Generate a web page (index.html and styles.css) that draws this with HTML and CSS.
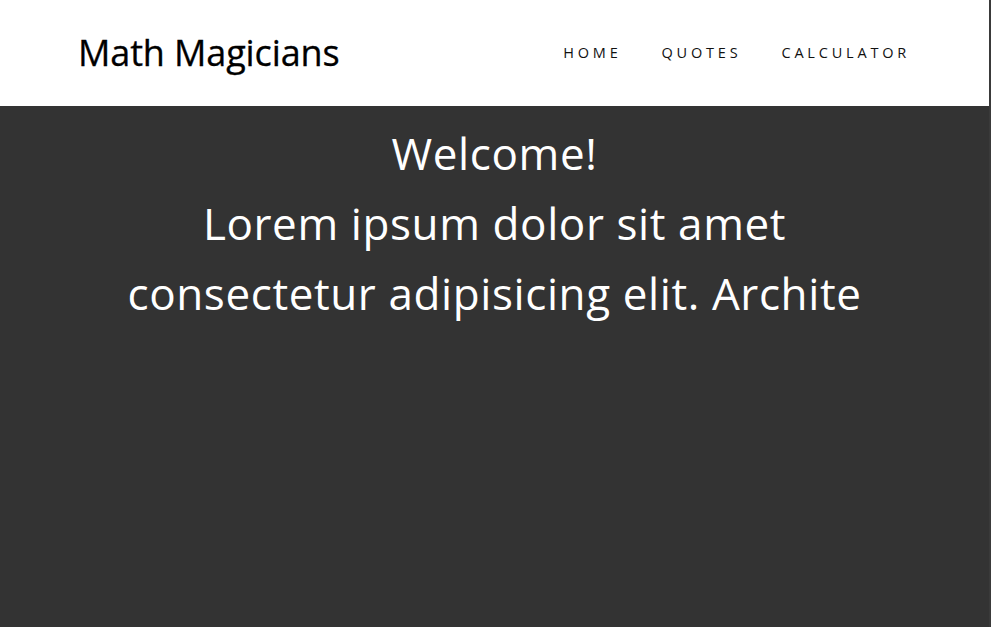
FILE: index.html
```html
<!DOCTYPE html>
<html lang="en">
<head>
<meta charset="utf-8">
<title>Math Magicians</title>
<link rel="stylesheet" href="styles.css">
</head>
<body>
<div class="page">
  <header class="header">
    <h1 class="logo">Math Magicians</h1>
    <nav class="nav">
      <a class="nav-link" href="#">Home</a>
      <a class="nav-link" href="#">Quotes</a>
      <a class="nav-link" href="#">Calculator</a>
    </nav>
  </header>
  <main class="hero">
    <h2 class="hero-title">Welcome!</h2>
    <p class="hero-text">Lorem ipsum dolor sit amet consectetur adipisicing elit. Archite</p>
  </main>
</div>
</body>
</html>
```
FILE: styles.css
```css
html, body {
  margin: 0;
  padding: 0;
  height: 100%;
}
body {
  font-family: "Open Sans", "Noto Sans", sans-serif;
  background: #333;
}
.page {
  display: flex;
  flex-direction: column;
  height: 100%;
  border-right: 2px solid #3a3a3a;
  box-sizing: border-box;
}
.header {
  background: #fff;
  height: 106px;
  flex-shrink: 0;
  display: flex;
  align-items: center;
  justify-content: space-between;
  padding: 0 79px 2px 78px;
  box-sizing: border-box;
}
.logo {
  margin: 0;
  font-size: 36px;
  font-weight: 400;
  color: #000;
  letter-spacing: -0.12px;
  -webkit-text-stroke: 0.3px #000;
}
.nav {
  display: flex;
  gap: 40px;
}
.nav-link {
  color: #111;
  text-decoration: none;
  text-transform: uppercase;
  font-size: 14.5px;
  letter-spacing: 3.8px;
}
.hero {
  flex: 1;
  background: #333;
  color: #fff;
  text-align: center;
  padding-top: 12px;
}
.hero-title {
  margin: 0;
  font-size: 44px;
  font-weight: 400;
  line-height: 70px;
  letter-spacing: 0.6px;
}
.hero-text {
  margin: 0 auto;
  max-width: 800px;
  font-size: 44px;
  line-height: 70px;
  letter-spacing: 0.6px;
}
```
